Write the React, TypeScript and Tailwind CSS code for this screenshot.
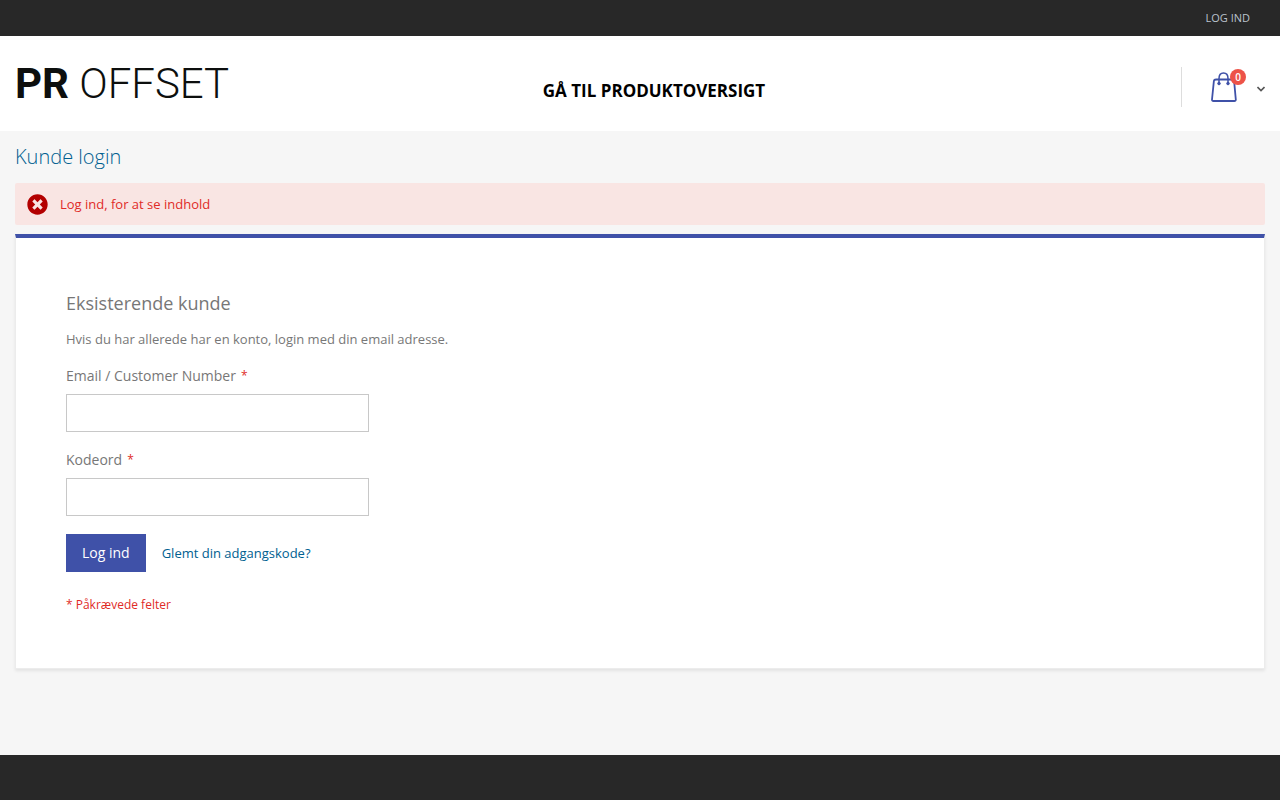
import type { ReactNode } from 'react'
import { FaTimesCircle } from 'react-icons/fa'

interface FieldProps {
  id: string
  type: string
  label: string
}

function BagIcon() {
  return (
    <svg className="h-8 w-[26px]" viewBox="0 0 26 32" fill="none" stroke="#3f51a8" aria-hidden="true">
      <path d="M5 8.5h16.500c1 0 1.500.5 1.600 1.400l1.700 18.600c.1 1-.5 1.500-1.400 1.500H2.400c-.9 0-1.500-.5-1.400-1.500L2.900 9.900c.1-.9.600-1.400 2.100-1.400z" strokeWidth="1.800" />
      <path d="M8 13V7.500C8 4 10 2 12.500 2S17 4 17 7.500V13" strokeWidth="1.500" />
      <circle cx="8" cy="12.500" r="1.300" fill="#3f51a8" strokeWidth="1" />
      <circle cx="17" cy="12.500" r="1.300" fill="#3f51a8" strokeWidth="1" />
    </svg>
  )
}

function Required({ children }: { children?: ReactNode }) {
  return <span className="text-xs text-[#e02b27]">*{children}</span>
}

function Field({ id, type, label }: FieldProps) {
  return (
    <div className="mb-[18px]">
      <label htmlFor={id} className="mb-2 flex h-5 items-center gap-[5px] text-sm">
        {label}
        <Required />
      </label>
      <input id={id} name={id} type={type} className="block h-[38px] w-full max-w-[303px] border border-[#c8c8c8] bg-white px-3 text-sm outline-none" />
    </div>
  )
}

export default function App() {
  return (
    <div className="flex min-h-screen flex-col bg-[#f6f6f6] font-['Open_Sans',sans-serif] text-[13px] leading-5 text-[#777777]">
      <div className="flex h-9 items-center justify-end bg-[#282828] px-[30px]">
        <a href="#login" className="text-[11px] uppercase text-[#bbc3ce]">Log ind</a>
      </div>

      <header className="grid h-[95px] grid-cols-[1fr_auto_1fr] items-center bg-white px-[15px]">
        <a href="#home" className="whitespace-pre font-['Roboto',sans-serif] text-[42px] leading-[42px] font-light text-[#0d0f0e]">
          <span className="font-bold">PR</span> OFFSET
        </a>
        <a href="#products" className="pt-3.5 pl-7 text-[17px] font-bold text-black">GÅ TIL PRODUKTOVERSIGT</a>
        <button type="button" aria-label="Indkøbskurv" className="mt-1.5 ml-auto flex h-10 items-center border-l border-[#dddddd] pl-[29px]">
          <span className="relative mr-5 block">
            <BagIcon />
            <span className="absolute -top-0.5 -right-[9px] flex size-4 items-center justify-center rounded-full bg-[#ed5348] text-[10px] font-semibold text-white">0</span>
          </span>
          <svg className="h-3 w-2" viewBox="0 0 8 12" fill="none" stroke="#555555" strokeWidth="1.600" aria-hidden="true">
            <path d="M.5 6 4 9.500 7.500 6" />
          </svg>
        </button>
      </header>

      <main className="px-[15px] pb-[86px]">
        <h1 className="flex h-[52px] items-center text-xl font-light text-[#006090]">Kunde login</h1>

        <div role="alert" className="mb-[9px] flex h-[42px] items-center gap-3 rounded-xs bg-[#f9e5e3] px-3 text-[#e02b27]">
          <FaTimesCircle className="size-[21px] text-[#b30000]" />
          Log ind, for at se indhold
        </div>

        <section id="login" className="border border-t-4 border-[#ececec] border-t-[#3f51a8] bg-white p-[50px] shadow-[0_2px_3px_rgba(0,0,0,0.08)]">
          <form onSubmit={(e) => e.preventDefault()}>
            <h2 className="mt-[3px] mb-3.5 text-lg leading-6">Eksisterende kunde</h2>
            <p className="mb-[17px]">Hvis du har allerede har en konto, login med din email adresse.</p>
            <Field id="email" type="text" label="Email / Customer Number" />
            <Field id="password" type="password" label="Kodeord" />
            <div className="mb-[22px] flex items-center gap-4">
              <button type="submit" className="h-[38px] bg-[#3f51a8] px-4 text-sm text-white">Log ind</button>
              <a href="#forgot" className="text-[#006090]">Glemt din adgangskode?</a>
            </div>
            <p className="mb-1">
              <Required> Påkrævede felter</Required>
            </p>
          </form>
        </section>
      </main>

      <footer className="min-h-[45px] grow bg-[#282828]" />
    </div>
  )
}
